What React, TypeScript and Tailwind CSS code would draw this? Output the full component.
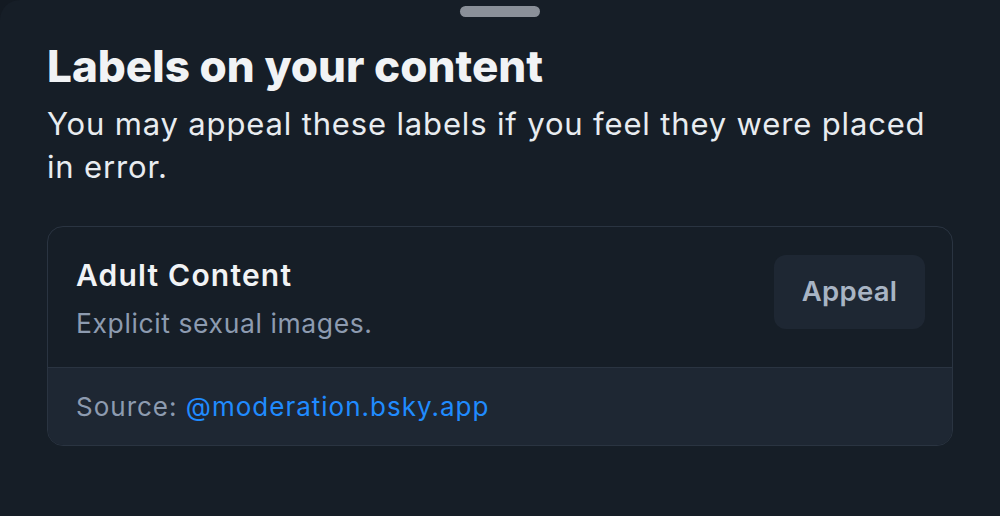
export default function App() {
  return (
    <div className="w-[1000px] h-[516px] bg-[#131a22] overflow-hidden" style={{ fontFamily: "Inter, 'Noto Sans', sans-serif" }}>
      <div className="h-full bg-[#161e27] rounded-tl-[20px] px-[47px] flex flex-col">
        <div className="flex justify-center pt-[6px]">
          <div className="w-[80px] h-[11px] rounded-full bg-[#8a9099]" />
        </div>
        <h1 className="mt-[23px] text-[44px] leading-[52px] font-extrabold text-[#f1f3f5]">Labels on your content</h1>
        <p className="mt-[10px] text-[31px] leading-[43px] tracking-[0.85px] text-[#e8ecf0]">
          You may appeal these labels if you feel they were placed in error.
        </p>
        <div className="mt-[38px] rounded-[16px] border border-[#2a3441] overflow-hidden">
          <div className="flex items-start justify-between pl-[28px] pr-[27px] pt-[28px] pb-[28px]">
            <div className="flex flex-col pt-[2px]">
              <div className="text-[30px] leading-[36px] font-semibold tracking-[1.2px] text-[#f1f3f5]">Adult Content</div>
              <div className="mt-[14px] text-[26.5px] leading-[32px] tracking-[0.6px] text-[#8d9bb0]">Explicit sexual images.</div>
            </div>
            <div className="w-[151px] h-[74px] rounded-[12px] bg-[#1e2733] flex items-center justify-center text-[27.5px] font-semibold tracking-[0.3px] text-[#a8b4c4]">
              Appeal
            </div>
          </div>
          <div className="bg-[#1e2733] border-t border-[#2a3441] pl-[28px] h-[78px] flex items-center text-[26px] tracking-[1px] text-[#8d9bb0]">
            Source:&nbsp;<span className="text-[#208bfe]">@moderation.bsky.app</span>
          </div>
        </div>
      </div>
    </div>
  );
}
